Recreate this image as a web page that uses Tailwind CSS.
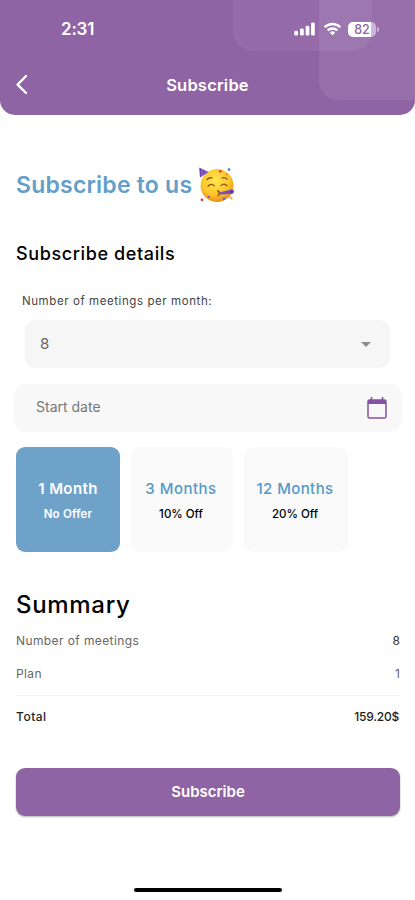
<!DOCTYPE html>
<html lang="en">
<head>
    <meta charset="UTF-8">
    <meta name="viewport" content="width=device-width, initial-scale=1.0">
    <title>Subscribe</title>
    <script src="https://cdn.jsdelivr.net/npm/@tailwindcss/browser@4"></script>
</head>
<body class="bg-white h-[900px] overflow-hidden flex flex-col font-['Inter',sans-serif] text-black">
    <!-- Header -->
    <header class="relative h-[115px] shrink-0 bg-[#8f64a4] rounded-b-[15px] overflow-hidden text-white">
        <div class="absolute left-[233px] -top-10 w-[139px] h-[91px] rounded-[20px] bg-white/5"></div>
        <div class="absolute left-[319px] -top-10 w-[130px] h-[140px] rounded-[20px] bg-white/8"></div>

        <!-- Status Bar -->
        <div class="relative h-[58px] pl-[61px] pr-[36px] flex items-center justify-between">
            <span class="pt-px text-[17px] font-semibold tracking-[-0.2px]">2:31</span>
            <div class="flex items-center">
                <svg class="w-[22px] h-[14px]" viewBox="0 0 23 15" fill="currentColor">
                    <rect x="0" y="9.5" width="4" height="5" rx="1.5"/>
                    <rect x="6.2" y="7" width="4" height="7.5" rx="1.5"/>
                    <rect x="12.2" y="4" width="4" height="10.5" rx="1.5"/>
                    <rect x="18" y="0.5" width="4" height="14" rx="1.5"/>
                </svg>
                <svg class="w-[19px] h-[14px] ml-[7px]" viewBox="0 0 20 15" fill="none" stroke="currentColor" stroke-width="2.5">
                    <path d="M1.6 5.6a12 12 0 0 1 16.8 0"/>
                    <path d="M4.9 9a7.3 7.3 0 0 1 10.2 0"/>
                    <path d="M10 14.2 7.2 11.4a4 4 0 0 1 5.6 0z" fill="currentColor" stroke="none"/>
                </svg>
                <div class="ml-[6px] w-[28px] h-[15px] rounded-[5px] bg-linear-to-r from-white from-82% to-white/50 to-82% text-[#8f64a4] text-[12.5px] font-medium leading-[15px] text-center">82</div>
                <div class="ml-px w-[2px] h-[5px] rounded-r-full bg-white/50"></div>
            </div>
        </div>

        <!-- Title Bar -->
        <div class="relative h-[54px] flex items-center justify-center">
            <svg class="absolute left-[15px] top-[16px] w-[13px] h-[21px]" viewBox="0 0 13 21" fill="none" stroke="currentColor" stroke-width="2.4" stroke-linecap="round" stroke-linejoin="round">
                <path d="M11 2 2.6 10.6 11 19"/>
            </svg>
            <h1 class="text-[16.5px] font-semibold tracking-[0.2px]">Subscribe</h1>
        </div>
    </header>

    <main class="pl-4 pr-[15px]">
        <div class="mt-[50px] h-10 flex items-center">
            <h2 class="w-[176px] text-[23px] font-semibold tracking-[0.22px] text-[#649fc9] whitespace-nowrap">Subscribe to us</h2>
            <svg class="ml-[6px] w-[38px] h-[36px]" viewBox="0 0 38 36">
                <defs>
                    <radialGradient id="face" cx="45%" cy="35%" r="65%">
                        <stop offset="0" stop-color="#ffe64d"/>
                        <stop offset="0.65" stop-color="#fcc62c"/>
                        <stop offset="1" stop-color="#e98f1d"/>
                    </radialGradient>
                </defs>
                <circle cx="19" cy="18.5" r="16.5" fill="url(#face)"/>
                <path d="M1.2.4 10.5 5 2 10.5z" fill="#6d42b5"/>
                <path d="M4.2 2 4.1 9.2M7.3 3.5 7.1 7.3" stroke="#9d77d5" stroke-width="1"/>
                <g fill="none" stroke="#8a5311" stroke-width="1.3" stroke-linecap="round">
                    <path d="M9 12.5q2-2.2 5-1.6M24 11q3-1 5 1"/>
                    <path d="M10 19.2q3-3.4 6.4-.4M23 18.6q3.2-3 6 .2"/>
                    <path d="M19.5 24q3 .2 1 2.2 2 1.8-.6 2.4" stroke="#a14b12"/>
                </g>
                <path d="M21 25.5 33.2 22.4q3.2-.2 2.9 2.3-.5 2.8-3.4 2.3L21.5 27.6z" fill="#7950bd"/>
                <circle cx="33.2" cy="24.8" r="1.2" fill="#573092"/>
                <circle cx="22.3" cy="4.3" r="1.4" fill="#e43d32"/>
                <circle cx="31" cy="2.6" r="1.4" fill="#4383cf"/>
                <circle cx="28.5" cy="7.4" r="1" fill="#ef762c"/>
                <circle cx="4" cy="32.8" r="1.4" fill="#df3442"/>
                <circle cx="10.6" cy="30" r="1.1" fill="#6b43b6"/>
                <circle cx="26" cy="31.7" r="1.3" fill="#3f78c4"/>
                <path d="m31 29.5 3.4 2.6" stroke="#f29a39" stroke-width="1.5"/>
            </svg>
        </div>

        <h3 class="mt-[34px] text-[18px] leading-[30px] font-medium tracking-[0.62px]">Subscribe details</h3>

        <!-- Form -->
        <p class="mt-[22px] ml-[6px] text-[11.5px] leading-[21px] tracking-[0.58px] text-[#444]">Number of meetings per month:</p>
        <div class="mt-[8px] ml-[9px] mr-[10px] h-12 rounded-[10px] bg-[#f6f6f6] flex items-center justify-between pl-[15px] pr-[19px]">
            <span class="text-[15px] text-[#666]">8</span>
            <svg class="w-[10px] h-[5px]" viewBox="0 0 10 5" fill="#8c8c8c"><path d="M0 0h10L5 5z"/></svg>
        </div>
        <div class="mt-4 -mx-[2px] h-12 rounded-[14px] bg-[#f8f8f8] flex items-center justify-between pl-[22px] pr-[15px]">
            <span class="text-[14px] leading-5 pb-[3px] text-[#777]">Start date</span>
            <svg class="w-[20px] h-[22px]" viewBox="0 0 20 22" fill="none" stroke="#8552a0">
                <rect x="1" y="3" width="18" height="18" rx="1.6" stroke-width="1.5"/>
                <path d="M1 5h18" stroke-width="4"/>
                <path d="M4.5 0v4M15.5 0v4" stroke-width="1.6"/>
            </svg>
        </div>

        <!-- Plans -->
        <div class="mt-[15px] flex gap-[11px] text-center">
            <div class="w-[104px] h-[105px] rounded-[9px] bg-[#6fa2c9] text-white pt-[30px]">
                <p class="text-[15px] leading-6 font-semibold tracking-[0.4px]">1 Month</p>
                <p class="text-[11.5px] leading-[18px] mt-[4px] font-semibold tracking-[0.2px]">No Offer</p>
            </div>
            <div class="w-[102px] h-[105px] rounded-[9px] bg-[#fafafa] pt-[30px] pr-[2px]">
                <p class="text-[15px] leading-6 font-medium tracking-[0.5px] text-[#5599c7]">3 Months</p>
                <p class="text-[11.5px] leading-[18px] mt-[4px] font-medium">10% Off</p>
            </div>
            <div class="w-[104px] h-[105px] rounded-[9px] bg-[#fafafa] pt-[30px] pr-[2px]">
                <p class="text-[15px] leading-6 font-medium tracking-[0.4px] text-[#5599c7]">12 Months</p>
                <p class="text-[11.5px] leading-[18px] mt-[4px] font-medium">20% Off</p>
            </div>
        </div>

        <!-- Summary -->
        <div class="mt-[17px] border-t border-[#fafafa]"></div>
        <h2 class="mt-[19px] text-[24px] leading-8 font-medium tracking-[0.7px]">Summary</h2>
        <div class="mt-[9px] flex justify-between text-[12px] leading-[21px] text-[#666]">
            <span class="tracking-[0.4px]">Number of meetings</span>
            <span class="text-[#333]">8</span>
        </div>
        <div class="mt-[12px] flex justify-between text-[12px] leading-[21px] text-[#666]">
            <span class="tracking-[0.4px]">Plan</span>
            <span>1</span>
        </div>
        <div class="mt-[11px] border-t border-[#f4f4f4]"></div>
        <div class="mt-[11px] flex justify-between text-[12px] leading-5 font-medium text-[#222]">
            <span class="tracking-[0.5px]">Total</span>
            <span class="pr-px tracking-[-0.2px]">159.20$</span>
        </div>

        <button class="mt-[41px] w-full h-12 rounded-[9px] bg-[#8f64a4] text-white text-[15px] font-semibold shadow-[0_1px_2px_rgba(0,0,0,0.3)]">Subscribe</button>
    </main>

    <!-- Home Indicator -->
    <div class="mt-auto mb-[8px] mx-auto w-[148px] h-[4px] rounded-full bg-black shrink-0"></div>
</body>
</html>
